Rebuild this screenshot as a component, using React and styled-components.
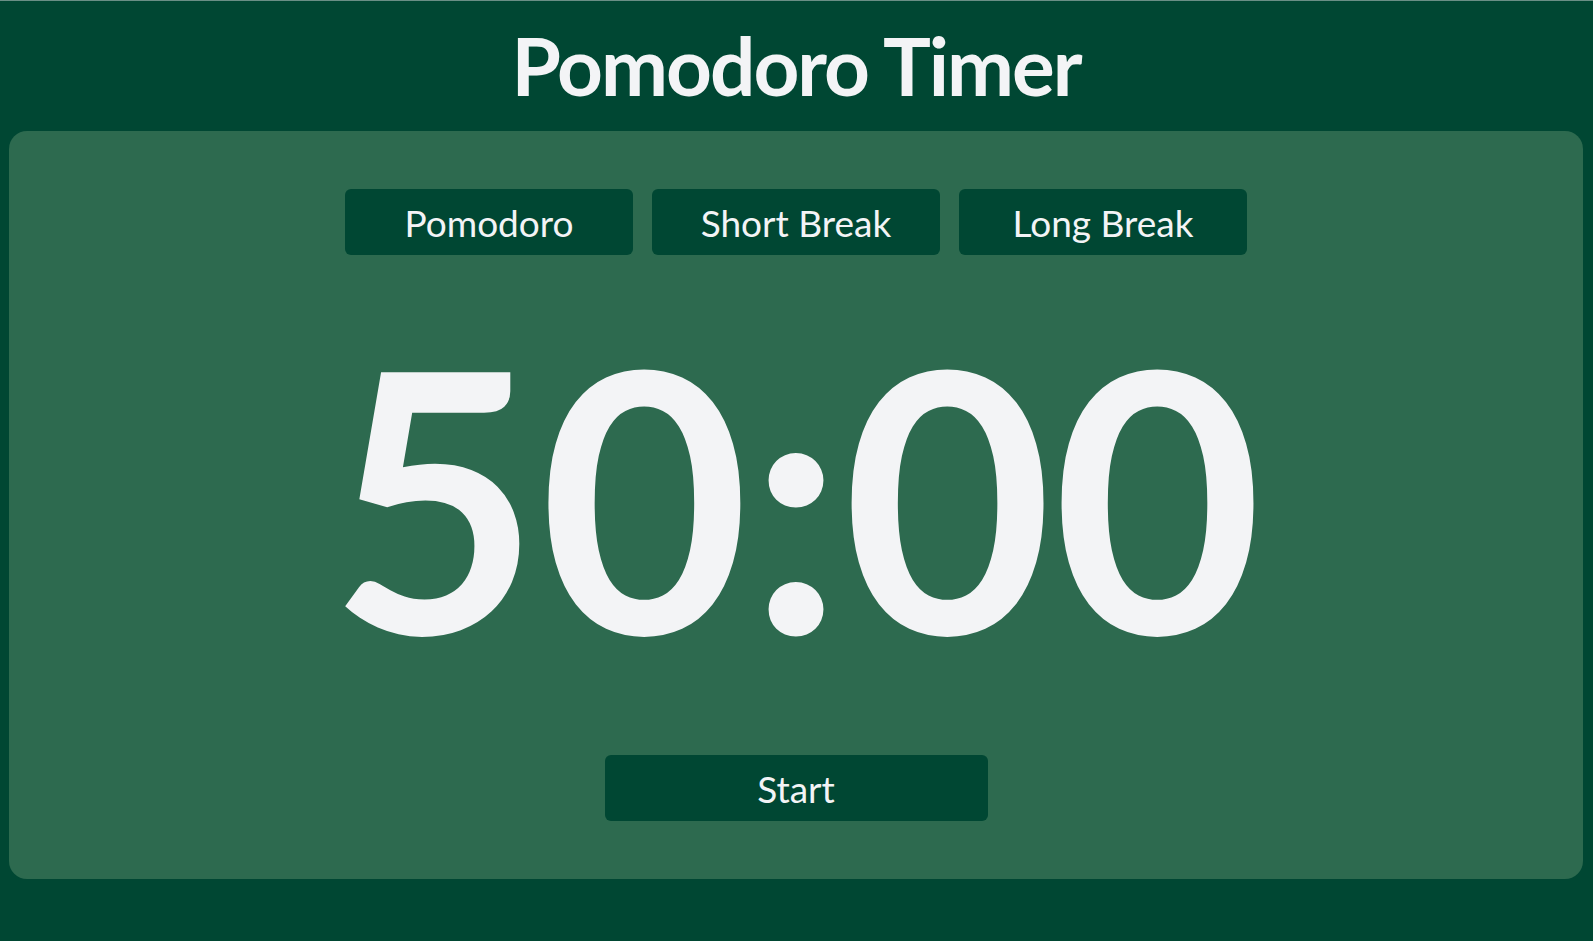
import React, { useState } from "react";
import styled, { createGlobalStyle } from "styled-components";

const Global = createGlobalStyle`
  html, body {
    margin: 0;
    padding: 0;
    background: #004733;
  }
  body {
    font-family: "Lato", "Liberation Sans", sans-serif;
    color: #f3f4f6;
    border-top: 1px solid #6a8f86;
    min-height: 940px;
  }
  * { box-sizing: border-box; }
`;

const Page = styled.div`
  display: flex;
  flex-direction: column;
  align-items: stretch;
  padding: 24px 10px 0 9px;
`;

const Title = styled.h1`
  margin: 0 0 26px;
  font-size: 80px;
  line-height: 1;
  font-weight: 700;
  letter-spacing: -2px;
  text-align: center;
  color: #f3f4f6;
`;

const Card = styled.main`
  background: #2d6a4f;
  border-radius: 18px;
  padding: 58px 0;
  display: flex;
  flex-direction: column;
  align-items: center;
`;

const Tabs = styled.nav`
  display: flex;
  gap: 19px;
`;

const Button = styled.button`
  width: ${(p) => p.$width}px;
  height: 66px;
  border: none;
  border-radius: 6px;
  background: #004733;
  color: #f3f4f6;
  font-family: "Lato", "Liberation Sans", sans-serif;
  font-size: 37px;
  font-weight: 400;
  cursor: pointer;
  padding: 0;
`;

const Time = styled.div`
  margin: 58px 0 80px;
  font-size: 362px;
  line-height: 1;
  font-weight: 700;
  color: #f3f4f6;
`;

export default function App() {
  const [mode, setMode] = useState("pomodoro");
  return (
    <>
      <Global />
      <Page>
        <Title>Pomodoro Timer</Title>
        <Card>
          <Tabs>
            <Button $width={288} onClick={() => setMode("pomodoro")}>Pomodoro</Button>
            <Button $width={288} onClick={() => setMode("short")}>Short Break</Button>
            <Button $width={288} onClick={() => setMode("long")}>Long Break</Button>
          </Tabs>
          <Time>50:00</Time>
          <Button $width={383}>Start</Button>
        </Card>
      </Page>
    </>
  );
}
